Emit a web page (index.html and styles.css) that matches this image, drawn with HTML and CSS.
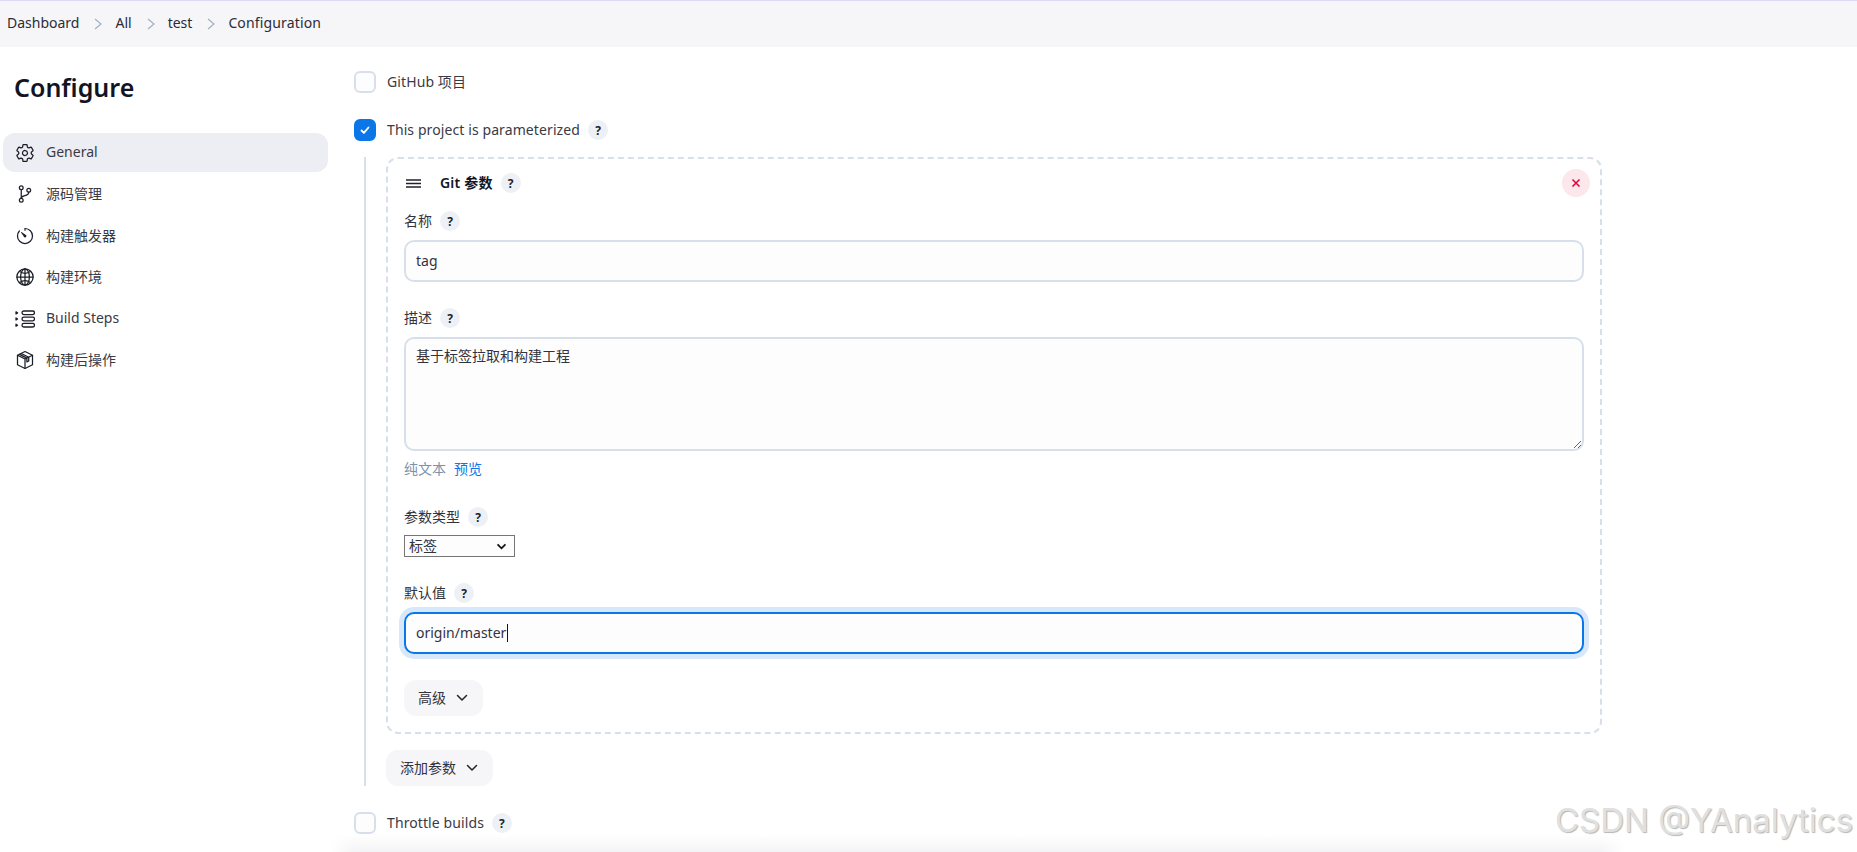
FILE: index.html
```html
<!DOCTYPE html>
<html lang="zh">
<head>
<meta charset="utf-8">
<title>Configuration</title>
<link rel="stylesheet" href="styles.css">
</head>
<body>
<nav class="crumbs">
  <span>Dashboard</span>
  <svg class="sep" viewBox="0 0 10 12"><path d="M2 1l6 5-6 5"/></svg>
  <span>All</span>
  <svg class="sep" viewBox="0 0 10 12"><path d="M2 1l6 5-6 5"/></svg>
  <span>test</span>
  <svg class="sep" viewBox="0 0 10 12"><path d="M2 1l6 5-6 5"/></svg>
  <span class="wide">Configuration</span>
</nav>
<div class="layout">
  <aside class="side">
    <h1 class="title">Configure</h1>
    <ul class="menu">
      <li class="item active">
        <svg class="ico" viewBox="0 0 512 512"><path d="M262.29 192.31a64 64 0 1 0 57.4 57.4 64.13 64.13 0 0 0-57.4-57.4zM416.39 256a154.34 154.34 0 0 1-1.53 20.79l45.21 35.46a10.81 10.81 0 0 1 2.45 13.75l-42.77 74a10.81 10.81 0 0 1-13.14 4.59l-44.9-18.08a16.11 16.11 0 0 0-15.17 1.75A164.48 164.48 0 0 1 325 400.8a15.94 15.94 0 0 0-8.82 12.14l-6.73 47.89a11.08 11.08 0 0 1-10.68 9.17h-85.54a11.11 11.11 0 0 1-10.69-8.87l-6.72-47.82a16.07 16.07 0 0 0-9-12.22 155.3 155.3 0 0 1-21.46-12.57 16 16 0 0 0-15.11-1.71l-44.89 18.07a10.81 10.81 0 0 1-13.14-4.58l-42.77-74a10.8 10.8 0 0 1 2.45-13.75l38.21-30a16.05 16.05 0 0 0 6-14.08c-.36-4.17-.58-8.33-.58-12.5s.21-8.27.58-12.35a16 16 0 0 0-6.07-13.94l-38.19-30A10.81 10.81 0 0 1 49.48 186l42.77-74a10.81 10.81 0 0 1 13.14-4.59l44.9 18.08a16.11 16.11 0 0 0 15.17-1.75A164.48 164.48 0 0 1 187 111.2a15.94 15.94 0 0 0 8.82-12.14l6.73-47.89A11.08 11.08 0 0 1 213.23 42h85.54a11.11 11.11 0 0 1 10.69 8.87l6.72 47.82a16.07 16.07 0 0 0 9 12.22 155.3 155.3 0 0 1 21.46 12.57 16 16 0 0 0 15.11 1.71l44.89-18.07a10.81 10.81 0 0 1 13.14 4.58l42.77 74a10.8 10.8 0 0 1-2.45 13.75l-38.21 30a16.05 16.05 0 0 0-6.05 14.08c.33 4.14.55 8.3.55 12.47z"/></svg>
        <span class="item-text">General</span>
      </li>
      <li class="item">
        <svg class="ico" viewBox="0 0 512 512"><circle cx="160" cy="96" r="48"/><circle cx="160" cy="416" r="48"/><path d="M160 368V144"/><circle cx="352" cy="160" r="48"/><path d="M352 208c0 128-192 48-192 160"/></svg>
        <span class="item-text">源码管理</span>
      </li>
      <li class="item">
        <svg class="ico" viewBox="0 0 512 512"><path d="M112.91 128A191.85 191.85 0 0 0 64 254c-1.18 106.35 85.65 193.8 192 194 106.2.2 192-85.83 192-192 0-104.54-83.55-189.61-187.51-192a4.36 4.36 0 0 0-4.49 4.44V106"/><path d="M233.38 278.63l-79-113a8.13 8.13 0 0 1 11.32-11.32l113 79a32.5 32.5 0 0 1-37.25 53.26 33.21 33.21 0 0 1-8.07-7.94z" class="solid"/></svg>
        <span class="item-text">构建触发器</span>
      </li>
      <li class="item">
        <svg class="ico" viewBox="0 0 512 512"><path d="M256 48C141.13 48 48 141.13 48 256s93.13 208 208 208 208-93.13 208-208S370.87 48 256 48z"/><path d="M256 48c-58.07 0-112.67 93.31-112.67 208S197.93 464 256 464s112.67-93.31 112.67-208S314.07 48 256 48z"/><path d="M117.33 117.33c38.24 27.15 86.38 43.34 138.67 43.34s100.43-16.19 138.67-43.34"/><path d="M394.67 394.67c-38.24-27.15-86.38-43.34-138.67-43.34s-100.43 16.19-138.67 43.34"/><path d="M256 48v416M464 256H48"/></svg>
        <span class="item-text">构建环境</span>
      </li>
      <li class="item">
        <svg class="ico" viewBox="0 0 20 20"><rect class="thin" x="7" y="2" width="12.5" height="3.6" rx="1.8"/><rect class="thin" x="7" y="8.2" width="12.5" height="3.6" rx="1.8"/><rect class="thin" x="7" y="14.4" width="12.5" height="3.6" rx="1.8"/><path class="thin" d="M1 2.900l1.600 1-1.600 1zM1 9l1.600 1-1.600 1zM1 15.200l1.600 1-1.600 1z"/></svg>
        <span class="item-text">Build Steps</span>
      </li>
      <li class="item">
        <svg class="ico" viewBox="0 0 512 512"><path d="M256 40l192 96v240L256 472 64 376V136z"/><path d="M64 136l192 96 192-96M256 232v240M160 88l192 96v96l-48 24v-96L112 112"/></svg>
        <span class="item-text">构建后操作</span>
      </li>
    </ul>
  </aside>
  <main class="main">
    <div class="check-row">
      <span class="box"></span>
      <span class="check-label">GitHub 项目</span>
    </div>
    <div class="check-row gap">
      <span class="box on"><svg viewBox="0 0 12 12"><path d="M2.5 6.5l2.4 2.4 4.6-5.4"/></svg></span>
      <span class="check-label">This project is parameterized</span>
      <span class="help">?</span>
    </div>
    <div class="nested">
      <section class="card">
        <header class="card-head">
          <svg class="drag" viewBox="0 0 15 9"><path d="M0 1h15M0 4.500h15M0 8h15"/></svg>
          <strong class="card-title">Git 参数</strong>
          <span class="help">?</span>
          <span class="close"><svg viewBox="0 0 10 10"><path d="M1.500 1.500l7 7M8.500 1.500l-7 7"/></svg></span>
        </header>
        <div class="label first"><span class="label-text">名称</span><span class="help">?</span></div>
        <input class="field" type="text" value="tag">
        <div class="label"><span class="label-text">描述</span><span class="help">?</span></div>
        <textarea class="field area">基于标签拉取和构建工程</textarea>
        <div class="links"><span class="muted">纯文本</span><span class="link">预览</span></div>
        <div class="label big"><span class="label-text">参数类型</span><span class="help">?</span></div>
        <select class="pick"><option>标签</option></select>
        <div class="label"><span class="label-text">默认值</span><span class="help">?</span></div>
        <div class="focus-wrap">
          <input class="field focused" type="text" value="origin/master">
          <span class="caret"></span>
        </div>
        <button class="btn adv" type="button">高级<svg class="chev" viewBox="0 0 12 8"><path d="M1.500 1.500L6 6l4.500-4.500"/></svg></button>
      </section>
      <button class="btn add" type="button">添加参数<svg class="chev" viewBox="0 0 12 8"><path d="M1.500 1.500L6 6l4.500-4.500"/></svg></button>
    </div>
    <div class="check-row throttle">
      <span class="box"></span>
      <span class="check-label">Throttle builds</span>
      <span class="help">?</span>
    </div>
  </main>
</div>
<div class="fade"></div>
<div class="mark">CSDN @YAnalytics</div>
</body>
</html>
```
FILE: styles.css
```css
* { box-sizing: border-box; }
html, body { margin: 0; padding: 0; height: 852px; overflow: hidden; background: #fff; }
body {
  position: relative;
  font-family: "Noto Sans", "Noto Sans CJK SC", sans-serif;
  font-size: 14px;
  color: #33333d;
}
.crumbs {
  height: 47px;
  border-top: 1px solid #dcd8fa;
  background: #f6f6f9;
  display: flex;
  align-items: center;
  padding: 0 0 3px 7px;
  color: #2c2c36;
}
.wide { letter-spacing: .15px; }
.sep { width: 10px; height: 12px; margin: 3px 12px 0 14px; fill: none; stroke: #9fb0c4; stroke-width: 1.2; }
.layout { display: flex; }
.side { width: 340px; flex: none; padding: 20px 12px 0 3px; }
.title { margin: 0 0 26px 11px; height: 40px; line-height: 40px; font-size: 25px; font-weight: 600; color: #14141f; }
.menu { list-style: none; margin: 0; padding: 0; display: flex; flex-direction: column; gap: 2.500px; }
.item { height: 39px; display: flex; align-items: center; gap: 11px; padding-left: 12px; border-radius: 12px; color: #3a3a45; }
.item.active { background: #edeef3; }
.item-text { padding-bottom: 2px; }
.ico { width: 20px; height: 20px; flex: none; fill: none; stroke: #1e1e28; stroke-width: 32; stroke-linecap: round; stroke-linejoin: round; }
.ico .thin { stroke-width: 1.300; }
.ico .solid { fill: #1e1e28; stroke: none; }
.main { flex: 1; padding: 24px 255px 0 14px; }
.check-row { display: flex; align-items: center; height: 22px; }
.check-row.gap { margin-top: 26px; }
.check-row.throttle { margin-top: 26px; }
.box { width: 22px; height: 22px; flex: none; border: 2px solid #d7e0ea; border-radius: 6px; background: #fdfdfd; margin-right: 11px; display: flex; align-items: center; justify-content: center; }
.box.on { background: #0b76e8; border-color: #0b76e8; }
.box svg { width: 12px; height: 12px; fill: none; stroke: #fff; stroke-width: 1.800; stroke-linecap: round; stroke-linejoin: round; }
.check-label { color: #3a3a45; letter-spacing: .1px; padding-bottom: 2px; }
.help { width: 20px; height: 20px; flex: none; border-radius: 50%; background: #edf0f4; color: #22222c; font-size: 12px; font-weight: 700; display: flex; align-items: center; justify-content: center; margin-left: 8px; }
.nested { margin: 16px 0 0 10px; border-left: 2px solid #d7e0ea; padding-left: 20px; height: 629px; }
.card { border: 2px dashed #d7e0ea; border-radius: 12px; padding: 10px 16px 16px 16px; height: 577px; display: flex; flex-direction: column; align-items: flex-start; }
.card-head { width: 100%; height: 28px; display: flex; align-items: center; }
.drag { width: 15px; height: 9px; margin: 0 19px 0 2px; fill: none; stroke: #22222c; stroke-width: 1.400; }
.card-title { font-size: 14px; font-weight: 600; color: #14141f; letter-spacing: .2px; padding-bottom: 2px; }
.close { width: 28px; height: 28px; margin: 0 -6px 0 auto; border-radius: 50%; background: #fce8ec; display: flex; align-items: center; justify-content: center; }
.close svg { width: 10px; height: 10px; fill: none; stroke: #e6003d; stroke-width: 1.600; }
.label { height: 20px; margin-top: 26px; display: flex; align-items: center; color: #33333d; }
.label-text { padding-bottom: 2px; }
.label.first { margin-top: 14px; }
.label.big { margin-top: 28px; }
.field { display: block; width: 100%; height: 42px; margin-top: 9px; padding: 0 10px 2px; border: 2px solid #d7e0ea; border-radius: 10px; background: #fdfdfd; font: inherit; color: #33333d; outline: none; }
.area { height: 114px; padding: 7px 10px; line-height: 20px; resize: vertical; }
.links { height: 20px; margin-top: 8px; padding-bottom: 2px; display: flex; align-items: center; gap: 8px; }
.muted { color: #7d93ad; }
.link { color: #0b76e8; }
.pick { display: block; width: 111px; height: 22px; margin-top: 8px; padding: 0 0 2px 4px; font: inherit; color: #33333d; appearance: none; border: 1px solid #767676; border-radius: 0; background: #fdfdfd url("data:image/svg+xml,%3Csvg xmlns='http://www.w3.org/2000/svg' viewBox='0 0 12 8'%3E%3Cpath d='M1.500 1.500L6 6l4.500-4.500' fill='none' stroke='%23111' stroke-width='2'/%3E%3C/svg%3E") no-repeat right 7px center / 11px 7px; }
.focus-wrap { position: relative; width: 100%; }
.focused { border-color: #0b76e8; box-shadow: 0 0 0 5px #d8e8fb; }
.caret { position: absolute; left: 102.500px; top: 21px; width: 1px; height: 18px; background: #14141f; }
.btn { height: 36px; border: 0; border-radius: 12px; background: #f6f6f9; font: inherit; color: #33333d; display: flex; align-items: center; gap: 10px; padding: 0 14px 2px; }
.chev { margin-top: 2px; }
.adv { margin-top: 26px; width: 79px; }
.add { margin-top: 16px; width: 107px; }
.chev { width: 12px; height: 8px; fill: none; stroke: #22222c; stroke-width: 1.500; stroke-linecap: round; stroke-linejoin: round; }
.fade { position: absolute; left: 330px; width: 1295px; bottom: 0; height: 18px; background: linear-gradient(to bottom, rgba(246,246,249,0), #f4f4f6); -webkit-mask-image: linear-gradient(to right, transparent, #000 24px, #000 calc(100% - 24px), transparent); mask-image: linear-gradient(to right, transparent, #000 24px, #000 calc(100% - 24px), transparent); }
.mark { position: absolute; left: 1555px; top: 796px; font-family: Inter, sans-serif; font-size: 33px; line-height: 48px; white-space: nowrap; color: #e0e0e0; text-shadow: 1px 1px 1px #b5b5b5; }
```
